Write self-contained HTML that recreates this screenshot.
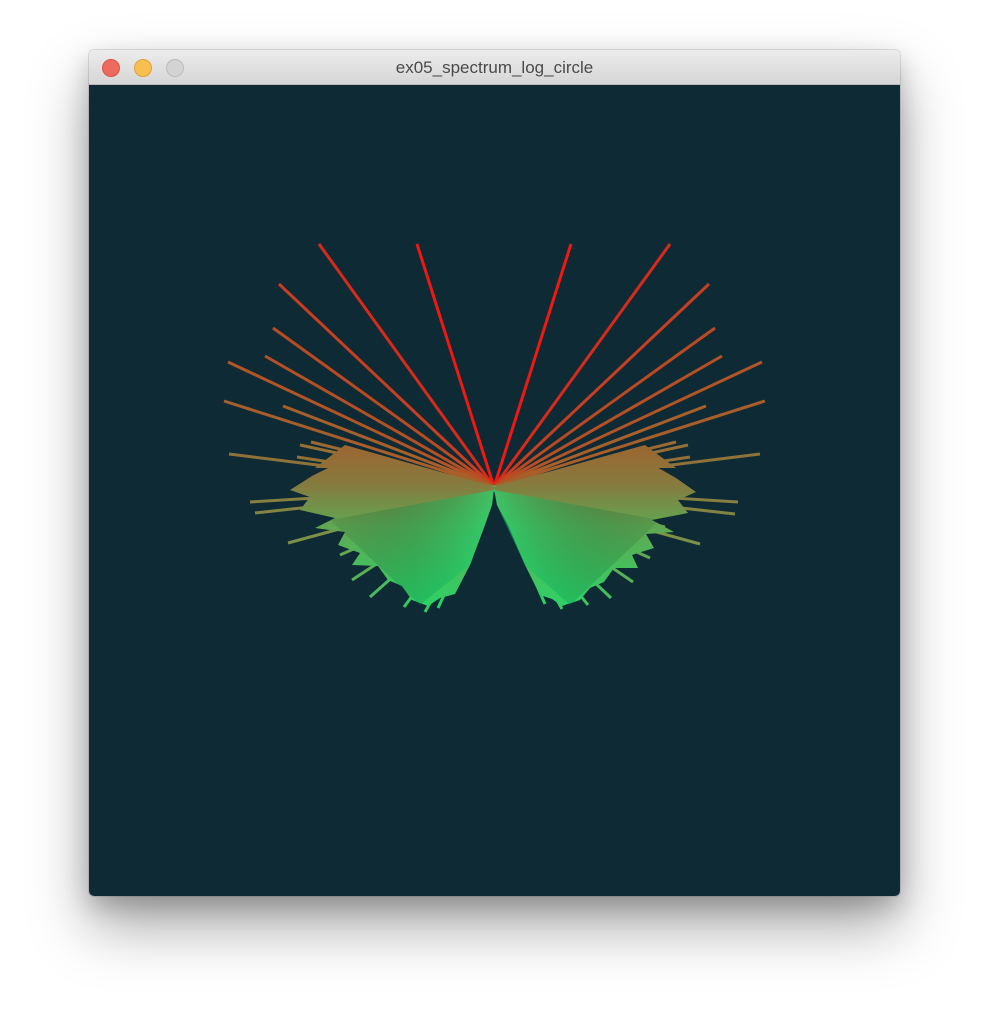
<!DOCTYPE html>
<html><head><meta charset="utf-8"><style>
html,body{margin:0;padding:0;background:#fff;width:989px;height:1024px;overflow:hidden;font-family:"Liberation Sans",sans-serif}
.win{position:absolute;left:89px;top:50px;width:811px;height:846px;border-radius:5px;overflow:hidden;box-shadow:0 30px 60px rgba(0,0,0,0.35),0 10px 25px rgba(0,0,0,0.2),0 0 0 1px rgba(0,0,0,0.1)}
.bar{height:35px;background:linear-gradient(#ececec,#d6d6d6);border-bottom:1px solid #b8b8b8;box-sizing:border-box;position:relative;text-align:center;line-height:36px;font-size:17px;color:#4a4a4a}
.d{position:absolute;top:9px;width:18px;height:18px;border-radius:50%;box-sizing:border-box}
.c{background:#0e2a35;height:811px;position:relative}
</style></head><body>
<div class="win">
<div class="bar">
<div class="d" style="left:13px;background:#ee6a5f;border:1px solid #d9524a"></div>
<div class="d" style="left:45px;background:#f6bf4f;border:1px solid #dea236"></div>
<div class="d" style="left:77px;background:#d3d3d3;border:1px solid #bcbcbc"></div>
ex05_spectrum_log_circle</div>
<div class="c"></div>
</div>
<svg width="989" height="1024" style="position:absolute;left:0;top:0">
<defs>
<linearGradient id="g" gradientUnits="userSpaceOnUse" x1="0" y1="240" x2="0" y2="615">
<stop offset="0" stop-color="#e8201a"/>
<stop offset="0.55" stop-color="#9c6630"/>
<stop offset="0.65" stop-color="#867a3e"/>
<stop offset="0.76" stop-color="#62a652"/>
<stop offset="1" stop-color="#28d868"/>
</linearGradient>
<linearGradient id="gl" gradientUnits="userSpaceOnUse" x1="300" y1="0" x2="494" y2="0">
<stop offset="0" stop-color="#000" stop-opacity="0"/>
<stop offset="1" stop-color="#10f080" stop-opacity="0.55"/>
</linearGradient>
<linearGradient id="gr" gradientUnits="userSpaceOnUse" x1="688" y1="0" x2="494" y2="0">
<stop offset="0" stop-color="#000" stop-opacity="0"/>
<stop offset="1" stop-color="#10f080" stop-opacity="0.55"/>
</linearGradient>
</defs>
<g stroke-width="3" stroke-linecap="butt">
<line x1="494" y1="487" x2="417" y2="244" stroke="#f01810"/>
<line x1="494" y1="487" x2="571" y2="244" stroke="#f01810"/>
<line x1="494" y1="487" x2="319" y2="244" stroke="#d82a18"/>
<line x1="494" y1="487" x2="670" y2="244" stroke="#d82a18"/>
<line x1="494" y1="487" x2="279" y2="284" stroke="#c83e20"/>
<line x1="494" y1="487" x2="709" y2="284" stroke="#c83e20"/>
<line x1="494" y1="487" x2="273" y2="328" stroke="#bb4a22"/>
<line x1="494" y1="487" x2="715" y2="328" stroke="#bb4a22"/>
<line x1="494" y1="487" x2="265" y2="356" stroke="#b55024"/>
<line x1="494" y1="487" x2="722" y2="356" stroke="#b55024"/>
<line x1="494" y1="487" x2="228" y2="362" stroke="#b25426"/>
<line x1="494" y1="487" x2="762" y2="362" stroke="#b25426"/>
<line x1="494" y1="487" x2="224" y2="401" stroke="#a85e2a"/>
<line x1="494" y1="487" x2="765" y2="401" stroke="#a85e2a"/>
<line x1="494" y1="487" x2="283" y2="406" stroke="#a8602a"/>
<line x1="494" y1="487" x2="706" y2="406" stroke="#a8602a"/>
<line x1="494" y1="487" x2="311" y2="442" stroke="#9a6a30"/>
<line x1="494" y1="487" x2="676" y2="442" stroke="#9a6a30"/>
<line x1="494" y1="487" x2="229" y2="454" stroke="#8e7238"/>
<line x1="494" y1="487" x2="760" y2="454" stroke="#8e7238"/>
<line x1="494" y1="487" x2="297" y2="457" stroke="#927036"/>
<line x1="494" y1="487" x2="690" y2="457" stroke="#927036"/>
<line x1="494" y1="487" x2="300" y2="445" stroke="#957034"/>
<line x1="494" y1="487" x2="688" y2="445" stroke="#957034"/>
<line x1="494" y1="487" x2="250" y2="502" stroke="#888040"/>
<line x1="494" y1="487" x2="738" y2="502" stroke="#888040"/>
<line x1="494" y1="487" x2="255" y2="513" stroke="#848442"/>
<line x1="494" y1="487" x2="735" y2="514" stroke="#848442"/>
<line x1="494" y1="487" x2="288" y2="543" stroke="#7c9046"/>
<line x1="494" y1="487" x2="700" y2="544" stroke="#7c9046"/>
<line x1="494" y1="487" x2="352" y2="580" stroke="#58b056"/>
<line x1="494" y1="487" x2="633" y2="582" stroke="#58b056"/>
<line x1="494" y1="487" x2="370" y2="597" stroke="#48bc5a"/>
<line x1="494" y1="487" x2="611" y2="598" stroke="#48bc5a"/>
<line x1="494" y1="487" x2="404" y2="607" stroke="#38c860"/>
<line x1="494" y1="487" x2="562" y2="609" stroke="#38c860"/>
<line x1="494" y1="487" x2="325" y2="525" stroke="#74984a"/>
<line x1="494" y1="487" x2="665" y2="527" stroke="#74984a"/>
<line x1="494" y1="487" x2="340" y2="555" stroke="#62a650"/>
<line x1="494" y1="487" x2="650" y2="558" stroke="#62a650"/>
<line x1="494" y1="487" x2="425" y2="612" stroke="#30cc62"/>
<line x1="494" y1="487" x2="545" y2="604" stroke="#30cc62"/>
<line x1="494" y1="487" x2="438" y2="608" stroke="#2ad064"/>
<line x1="494" y1="487" x2="588" y2="605" stroke="#40c45e"/>
</g>
<path fill="url(#g)" d="M494,487 L340,462 L312,476 L290,490 L310,497 L300,510 L335,518 L315,528 L345,532 L338,545 L360,553 L352,565 L378,566 L388,580 L402,586 L412,600 L428,606 L440,598 L455,594 L470,565 L485,525 L492,505 Z"/>
<path fill="url(#g)" d="M494,487 L648,462 L676,478 L696,492 L678,500 L688,513 L652,520 L674,532 L646,534 L654,548 L632,555 L638,568 L614,568 L604,582 L590,588 L580,600 L562,606 L552,599 L540,595 L525,565 L508,525 L497,505 Z"/>
<path fill="url(#g)" d="M494,487 L345,445 L315,468 L350,468 Z M494,487 L645,445 L676,468 L640,468 Z"/>
<path fill="url(#gl)" d="M494,490 L330,520 L420,605 L470,565 L492,505 Z"/>
<path fill="url(#gr)" d="M494,490 L660,520 L570,605 L525,565 L497,505 Z"/>
<path fill="#0e2a35" d="M494,503 L488,528 L478,558 L464,584 L452,606 L538,606 L526,584 L512,558 L501,528 Z"/>
</svg>
</body></html>
